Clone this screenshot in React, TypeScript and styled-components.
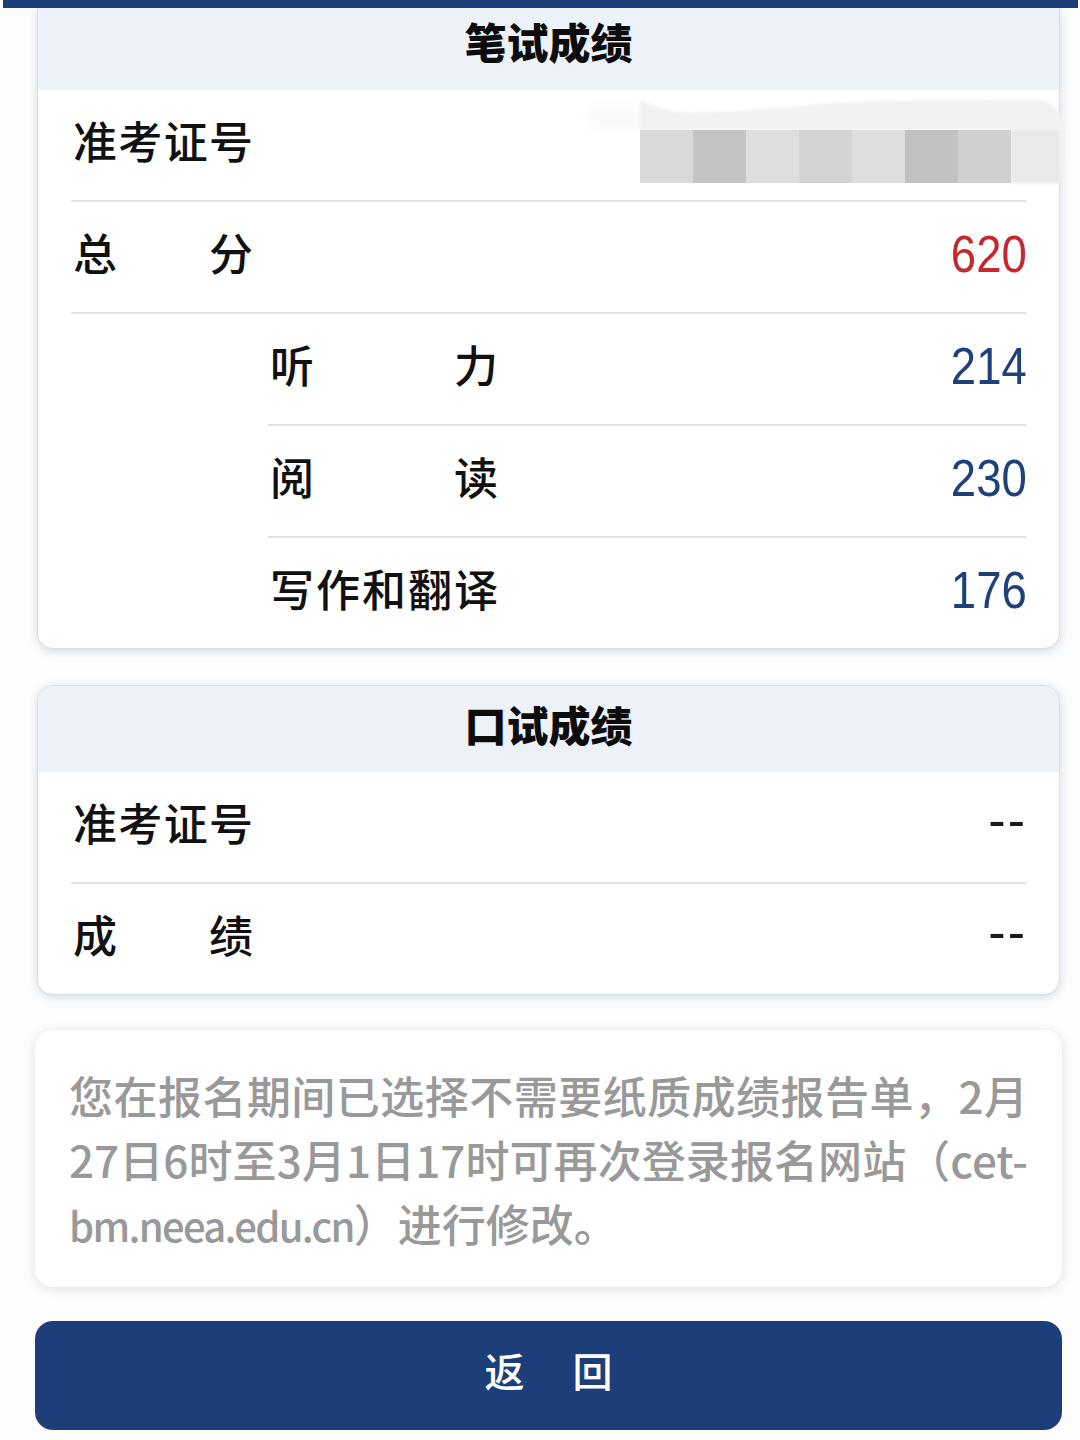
import React from "react";
import styled, { createGlobalStyle } from "styled-components";

const CJK = `"Noto Sans CJK SC", "Liberation Sans", sans-serif`;
const NUM = `"Liberation Sans", sans-serif`;

const GlobalStyle = createGlobalStyle`
  html, body {
    margin: 0;
    padding: 0;
    background: #fdfdfd;
  }
  * {
    box-sizing: border-box;
  }
`;

type Tone = "red" | "navy" | "black";

type RowData = {
  label: string;
  value: string;
  sub?: boolean;
  tone?: Tone;
};

const written: RowData[] = [
  { label: "总分", value: "620", tone: "red" },
  { label: "听力", value: "214", sub: true, tone: "navy" },
  { label: "阅读", value: "230", sub: true, tone: "navy" },
  { label: "写作和翻译", value: "176", sub: true, tone: "navy" },
];

const toneColors = { red: "#c32a2e", navy: "#1f4079", black: "#1a1a1a" };

const mosaic = ["#d9d9d9", "#c4c4c4", "#dedede", "#d4d4d4", "#dedede", "#c1c1c1", "#cfcfcf"];

// the smudge somebody painted over the candidate number
const Blur = () => (
  <BlurWrap width="500" height="112" viewBox="0 0 500 112">
    <defs>
      <filter id="faint" x="-20%" y="-40%" width="140%" height="180%">
        <feGaussianBlur stdDeviation="6" />
      </filter>
      <filter id="edge" x="-5%" y="-5%" width="110%" height="110%">
        <feGaussianBlur stdDeviation="1.5" />
      </filter>
    </defs>
    <rect x="14" y="18" width="60" height="24" fill="#f9f9f9" filter="url(#faint)" />
    <path
      d="M66 12 Q90 24 116 25 Q190 22 256 15 Q360 10 466 12 Q490 18 491 44 Q492 74 484 95 L437 95 L437 42 L66 42 Z"
      fill="#f2f2f2"
      filter="url(#edge)"
    />
    <rect x="437" y="42" width="48" height="53" fill="#e9e9e9" filter="url(#edge)" />
    {mosaic.map((c, i) => (
      <rect key={i} x={66 + i * 53} y="42" width="53" height="53" fill={c} />
    ))}
  </BlurWrap>
);

const Row = ({ label, value, sub, tone }: RowData) => (
  <RowBox $sub={sub}>
    <Label $wide={sub}>{label}</Label>
    <Value $tone={tone || "black"}>{value}</Value>
  </RowBox>
);

export default function App() {
  return (
    <Page>
      <GlobalStyle />
      <TopBar />
      <Stack>
        <Card $clipped>
          <CardHead $clipped>笔试成绩</CardHead>
          <RowBox>
            <Label>准考证号</Label>
            <Blur />
          </RowBox>
          {written.map((r) => (
            <Row key={r.label} {...r} />
          ))}
        </Card>
        <Card>
          <CardHead>口试成绩</CardHead>
          <Row label="准考证号" value="--" />
          <Row label="成绩" value="--" />
        </Card>
        <Note>
          <NoteLine $fill>您在报名期间已选择不需要纸质成绩报告单，2月</NoteLine>
          <NoteLine $fill>27日6时至3月1日17时可再次登录报名网站（cet-</NoteLine>
          <NoteLine>
            <Latin>bm.neea.edu.cn</Latin>）进行修改。
          </NoteLine>
        </Note>
        <BackButton>
          <span>返</span>
          <span>回</span>
        </BackButton>
      </Stack>
    </Page>
  );
}

const Page = styled.div`
  width: 1080px;
  height: 1440px;
  overflow: hidden;
  font-family: ${CJK};
  background: #fdfdfd;
`;

const TopBar = styled.div`
  position: relative;
  z-index: 1;
  height: 8px;
  margin: 0 2px 0 3px;
  background: #1c3f7a;
`;

const Stack = styled.div`
  display: flex;
  flex-direction: column;
  padding: 0 18px 0 35px;
`;

const Card = styled.section<{ $clipped?: boolean }>`
  margin: ${({ $clipped }) => ($clipped ? "0 2px 36px" : "0 2px 35px")};
  background: #fff;
  border: 1px solid #d3e1ee;
  border-top: ${({ $clipped }) => ($clipped ? "none" : "1px solid #d3e1ee")};
  border-radius: ${({ $clipped }) => ($clipped ? "0 0 16px 16px" : "16px")};
  box-shadow: 0 2px 10px rgba(110, 135, 170, 0.3);
`;

const CardHead = styled.h2<{ $clipped?: boolean }>`
  height: ${({ $clipped }) => ($clipped ? "82px" : "86px")};
  margin: 0;
  padding-bottom: ${({ $clipped }) => ($clipped ? "18px" : "12px")};
  display: flex;
  align-items: center;
  justify-content: center;
  background: #edf2f9;
  border-radius: ${({ $clipped }) => ($clipped ? "0" : "15px 15px 0 0")};
  color: #0c0c0c;
  font-size: 42px;
  font-weight: 900;
`;

const RowBox = styled.div<{ $sub?: boolean }>`
  position: relative;
  height: 112px;
  margin: 0 32px 0 ${({ $sub }) => ($sub ? "230px" : "33px")};
  padding: 0 0 8px 2px;
  display: flex;
  align-items: center;
  justify-content: space-between;
  border-bottom: 2px solid #dfe2e6;
  &:last-child {
    height: 110px;
    border-bottom: none;
  }
`;

const Label = styled.div<{ $wide?: boolean }>`
  width: ${({ $wide }) => ($wide ? "228px" : "180px")};
  margin-bottom: 2px;
  color: #111;
  font-size: 44px;
  font-weight: 500;
  line-height: 56px;
  text-align: justify;
  text-align-last: justify;
`;

const Value = styled.div<{ $tone: Tone }>`
  margin-bottom: ${({ $tone }) => ($tone === "black" ? "6px" : "0")};
  padding-top: ${({ $tone }) => ($tone === "black" ? "0" : "2px")};
  color: ${({ $tone }) => toneColors[$tone]};
  font-family: ${NUM};
  font-size: 52px;
  line-height: 56px;
  letter-spacing: ${({ $tone }) => ($tone === "black" ? "2px" : "0")};
  transform: ${({ $tone }) => ($tone === "black" ? "none" : "scaleX(0.875)")};
  transform-origin: right center;
`;

const BlurWrap = styled.svg`
  position: absolute;
  top: -2px;
  right: -47px;
`;

const Note = styled.section`
  height: 257px;
  margin-bottom: 34px;
  padding: 33px 34px 0 34px;
  background: #fff;
  border-radius: 18px;
  box-shadow: 0 2px 12px rgba(0, 0, 0, 0.12);
`;

const NoteLine = styled.div<{ $fill?: boolean }>`
  height: 64px;
  color: #999;
  font-size: 44px;
  font-weight: 500;
  line-height: 64px;
  text-align: ${({ $fill }) => ($fill ? "justify" : "left")};
  text-align-last: ${({ $fill }) => ($fill ? "justify" : "left")};
  white-space: ${({ $fill }) => ($fill ? "normal" : "nowrap")};
`;

const Latin = styled.span`
  font-size: 40px;
  letter-spacing: -1.7px;
`;

const BackButton = styled.button`
  height: 109px;
  display: flex;
  align-items: center;
  justify-content: center;
  gap: 48px;
  padding: 0 0 12px;
  border: none;
  border-radius: 18px;
  background: #1c3f7a;
  color: #fff;
  font-family: ${CJK};
  font-size: 40px;
  font-weight: 500;
`;
